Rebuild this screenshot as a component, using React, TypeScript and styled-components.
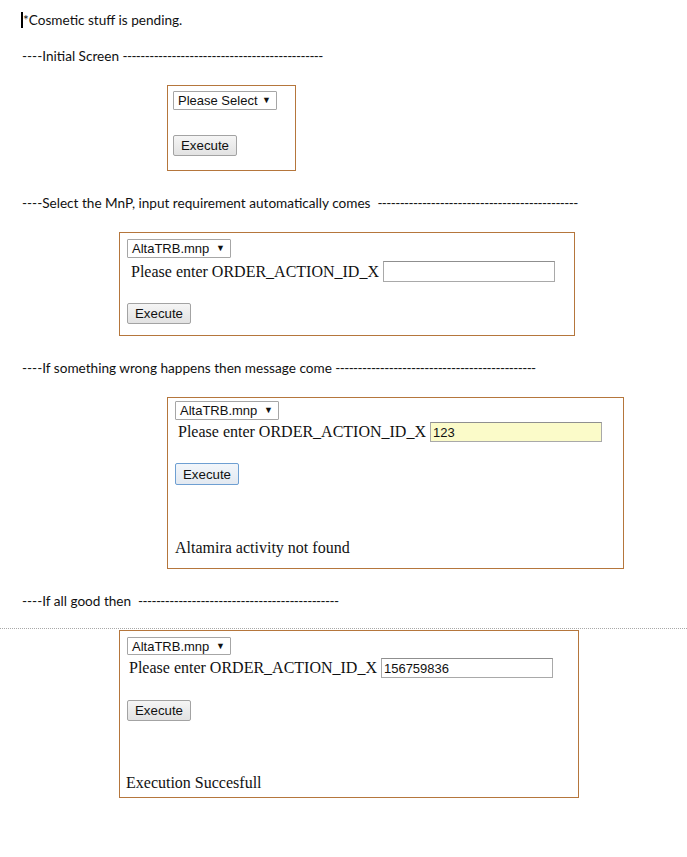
import React from 'react';
import styled, { createGlobalStyle } from 'styled-components';

const Global = createGlobalStyle`
  html, body { margin: 0; padding: 0; background: #ffffff; }
  body { font-family: Lato, "Open Sans", sans-serif; color: #111; }
`;

const Page = styled.div`
  width: 687px;
  min-height: 857px;
  box-sizing: border-box;
  padding-top: 12px;
  display: flex;
  flex-direction: column;
`;

const Note = styled.p`
  margin: 0 0 0 21px;
  display: flex;
  align-items: center;
  font-size: 13.6px;
  line-height: 16px;
  height: 16px;
`;

const Cursor = styled.span`
  width: 2px;
  height: 16px;
  background: #000;
`;

const Caption = styled.p<{ $top: number }>`
  margin: ${(p) => p.$top}px 0 0 22px;
  font-size: 13.6px;
  line-height: 16px;
  height: 16px;
  white-space: pre;
`;

const Dashes = styled.span`
  letter-spacing: -0.6px;
`;

const Divider = styled.hr`
  margin: 19px 0 0 0;
  border: 0;
  border-top: 1px dotted #a8a8a8;
  height: 0;
  width: 100%;
`;

const Frame = styled.div<{ $top: number; $left: number; $width: number; $height: number; $padTop: number }>`
  margin: ${(p) => p.$top}px 0 0 ${(p) => p.$left}px;
  width: ${(p) => p.$width}px;
  height: ${(p) => p.$height}px;
  box-sizing: border-box;
  border: 1px solid #b5763c;
  padding: ${(p) => p.$padTop}px 0 0 7px;
  display: flex;
  flex-direction: column;
  align-items: flex-start;
  background: #fff;
`;

const SelectBox = styled.div<{ $h: number }>`
  width: 104px;
  height: ${(p) => p.$h}px;
  box-sizing: border-box;
  border: 1px solid #a6a6a6;
  border-radius: 1px;
  background: #fff;
  display: flex;
  align-items: center;
  justify-content: space-between;
  padding: 0 5px 0 4px;
  font-family: "Liberation Sans", Arial, sans-serif;
  font-size: 13px;
  color: #111;
  white-space: nowrap;
`;

const Arrow = styled.span`
  font-size: 9px;
  line-height: 1;
  color: #111;
`;

const Row = styled.div<{ $top: number; $indent: number }>`
  margin: ${(p) => p.$top}px 0 0 ${(p) => p.$indent}px;
  display: flex;
  align-items: center;
  gap: 4px;
`;

const Label = styled.span`
  font-family: "Liberation Serif", "Times New Roman", serif;
  font-size: 16px;
  color: #111;
  white-space: nowrap;
`;

const TextInput = styled.input<{ $filled?: boolean; $h: number }>`
  width: 172px;
  height: ${(p) => p.$h}px;
  box-sizing: border-box;
  margin: 0;
  padding: 0 2px;
  border: 1px solid #a9a9a9;
  border-top-color: #8f8f8f;
  background: ${(p) => (p.$filled ? '#fbfbc9' : '#fff')};
  font-family: "Liberation Sans", Arial, sans-serif;
  font-size: 13px;
  color: #111;
  outline: none;
`;

const Button = styled.button<{ $top: number; $focus?: boolean; $h: number }>`
  margin: ${(p) => p.$top}px 0 0 0;
  width: 64px;
  height: ${(p) => p.$h}px;
  box-sizing: border-box;
  padding: 0;
  border: 1px solid ${(p) => (p.$focus ? '#6e9fd2' : '#a3a3a3')};
  border-radius: 2px;
  background: ${(p) =>
    p.$focus
      ? 'linear-gradient(#f2f6fb, #e3e9f1)'
      : 'linear-gradient(#f5f5f5, #e2e2e2)'};
  font-family: "Liberation Sans", Arial, sans-serif;
  font-size: 13.3px;
  color: #111;
`;

const Message = styled.p<{ $top: number; $indent: number }>`
  margin: ${(p) => p.$top}px 0 0 ${(p) => p.$indent}px;
  font-family: "Liberation Serif", "Times New Roman", serif;
  font-size: 16px;
  line-height: 18px;
  color: #111;
`;

const line = '-'.repeat(45);

export default function App() {
  return (
    <>
      <Global />
      <Page>
        <Note>
          <Cursor />
          *Cosmetic stuff is pending.
        </Note>

        <Caption $top={20}>
          {'----Initial Screen '}
          <Dashes>{line}</Dashes>
        </Caption>
        <Frame $top={21} $left={167} $width={129} $height={86} $padTop={5}>
          <SelectBox $h={19} style={{ marginLeft: -2 }}>
            Please Select <Arrow>▼</Arrow>
          </SelectBox>
          <Button $top={25} $h={21} style={{ marginLeft: -2 }}>
            Execute
          </Button>
        </Frame>

        <Caption $top={24}>
          {'----Select the MnP, input requirement automatically comes  '}
          <Dashes>{line}</Dashes>
        </Caption>
        <Frame $top={21} $left={119} $width={456} $height={104} $padTop={6}>
          <SelectBox $h={19}>
            AltaTRB.mnp <Arrow>▼</Arrow>
          </SelectBox>
          <Row $top={3} $indent={4}>
            <Label>Please enter ORDER_ACTION_ID_X</Label>
            <TextInput $h={21} readOnly value="" />
          </Row>
          <Button $top={21} $h={21}>
            Execute
          </Button>
        </Frame>

        <Caption $top={24}>
          {'----If something wrong happens then message come '}
          <Dashes>{line}</Dashes>
        </Caption>
        <Frame $top={21} $left={167} $width={457} $height={172} $padTop={3}>
          <SelectBox $h={19}>
            AltaTRB.mnp <Arrow>▼</Arrow>
          </SelectBox>
          <Row $top={2} $indent={3}>
            <Label>Please enter ORDER_ACTION_ID_X</Label>
            <TextInput $h={20} $filled readOnly value="123" />
          </Row>
          <Button $top={21} $h={22} $focus>
            Execute
          </Button>
          <Message $top={54} $indent={0}>Altamira activity not found</Message>
        </Frame>

        <Caption $top={24}>
          {'----If all good then  '}
          <Dashes>{line}</Dashes>
        </Caption>
        <Divider />
        <Frame $top={1} $left={119} $width={460} $height={168} $padTop={6}>
          <SelectBox $h={18}>
            AltaTRB.mnp <Arrow>▼</Arrow>
          </SelectBox>
          <Row $top={3} $indent={2}>
            <Label>Please enter ORDER_ACTION_ID_X</Label>
            <TextInput $h={20} readOnly value="156759836" />
          </Row>
          <Button $top={22} $h={21}>
            Execute
          </Button>
          <Message $top={53} $indent={-1}>Execution Succesfull</Message>
        </Frame>
      </Page>
    </>
  );
}
